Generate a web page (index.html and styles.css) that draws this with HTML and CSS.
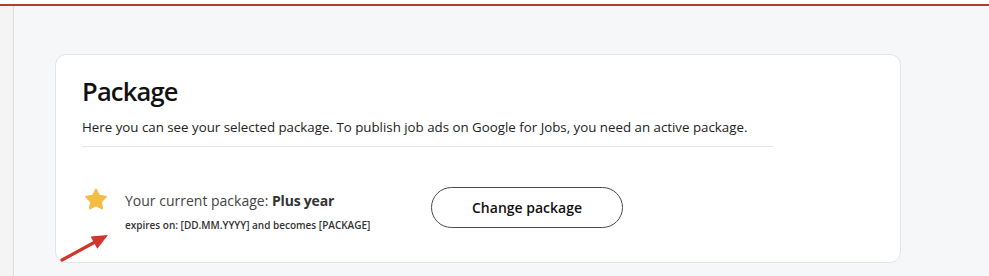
FILE: index.html
```html
<!DOCTYPE html>
<html lang="en">
<head>
<meta charset="utf-8">
<title>Package</title>
<link rel="stylesheet" href="styles.css">
</head>
<body>
<div class="topbar"></div>
<div class="layout">
  <aside class="sidebar"></aside>
  <main class="content">
    <section class="card">
      <h1 class="title">Package</h1>
      <p class="lead">Here you can see your selected package. To publish job ads on Google for Jobs, you need an active package.</p>
      <hr class="divider">
      <div class="row">
        <div class="current">
          <svg class="star" width="26" height="25" viewBox="0 0 24 24" aria-hidden="true">
            <path d="M12 2.6l2.9 5.9 6.5 0.95-4.7 4.6 1.1 6.5L12 17.5l-5.8 3.05 1.1-6.5-4.7-4.6 6.5-0.95z" fill="#f3bd43" stroke="#f3bd43" stroke-width="2" stroke-linejoin="round"/>
          </svg>
          <div class="info">
            <div class="name">Your current package: <strong>Plus year</strong></div>
            <div class="expires">expires on: [DD.MM.YYYY] and becomes [PACKAGE]</div>
          </div>
        </div>
        <button class="btn" type="button">Change package</button>
      </div>
    </section>
  </main>
</div>
<svg class="arrow" width="60" height="40" viewBox="55 228 60 40" aria-hidden="true">
  <line x1="62" y1="260" x2="96" y2="241.5" stroke="#d2352b" stroke-width="3.2" stroke-linecap="round"/>
  <polygon points="108,235 90.6,236.5 97.3,248.8" fill="#d2352b"/>
</svg>
</body>
</html>
```

FILE: styles.css
```css
* { box-sizing: border-box; }
html, body { margin: 0; padding: 0; }
body {
  background: #f6f7f9;
  font-family: "Open Sans", "Noto Sans", sans-serif;
  color: #222;
  height: 276px;
  overflow: hidden;
  position: relative;
}
.topbar {
  height: 6px;
  border-top: 4px solid #ffffff;
  background: #b93a30;
}
.layout {
  display: flex;
  height: 270px;
}
.sidebar {
  width: 14px;
  flex: 0 0 14px;
  background: #f4f4f5;
  border-right: 1px solid #dcdcdf;
}
.content {
  flex: 1;
  padding: 48px 0 0 41px;
}
.card {
  width: 846px;
  height: 209px;
  background: #fff;
  border: 1px solid #e3e4e8;
  border-radius: 11px;
  padding: 21px 26px 0;
}
.title {
  margin: 0;
  font-size: 25.5px;
  line-height: 31px;
  font-weight: 600;
  letter-spacing: -0.8px;
  color: #111;
}
.lead {
  margin: 11px 0 0;
  font-size: 13.3px;
  line-height: 18px;
  color: #222;
}
.divider {
  margin: 10px 0 0;
  width: 691px;
  height: 1px;
  border: 0;
  background: #e6e6e8;
}
.row {
  display: flex;
  align-items: flex-start;
  margin-top: 40px;
}
.current {
  display: flex;
  align-items: flex-start;
  gap: 16px;
  width: 349px;
  padding-left: 1px;
}
.star { display: block; flex: 0 0 auto; }
.info { padding-top: 4px; }
.name {
  font-size: 14px;
  line-height: 20px;
  color: #444;
}
.name strong { font-weight: 700; color: #333; letter-spacing: -0.2px; }
.expires {
  margin-top: 7px;
  font-size: 10px;
  line-height: 14px;
  font-weight: 600;
  color: #333;
}
.btn {
  width: 192px;
  height: 41px;
  border: 1px solid #4a4a4a;
  border-radius: 21px;
  background: #fff;
  font-family: "Open Sans", "Noto Sans", sans-serif;
  font-size: 14px;
  font-weight: 600;
  color: #111;
  padding: 0;
}
.arrow {
  position: absolute;
  left: 55px;
  top: 228px;
}
```
